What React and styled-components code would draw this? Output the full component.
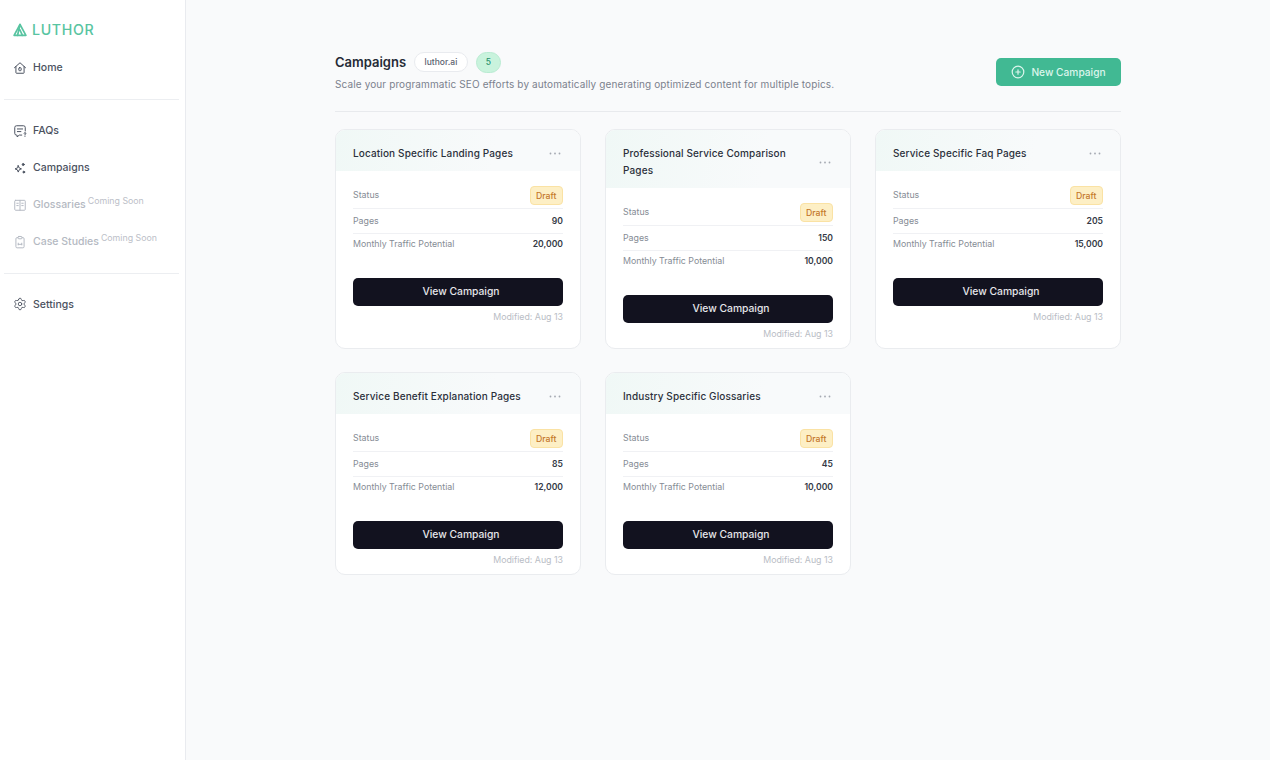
import React from 'react';
import styled, { createGlobalStyle } from 'styled-components';
import { Settings } from 'lucide-react';

const GlobalStyle = createGlobalStyle`
  html, body { margin: 0; padding: 0; }
  body {
    font-family: Inter, "Liberation Sans", sans-serif;
    background: #f9fafb;
    color: #1d2433;
  }
  * { box-sizing: border-box; }
`;

const Page = styled.div`
  display: flex;
  min-height: 760px;
`;

const Sidebar = styled.aside`
  width: 186px;
  flex-shrink: 0;
  background: #ffffff;
  border-right: 1px solid #e9ebef;
  padding: 21px 6px 0 4px;
`;

const Logo = styled.div`
  display: flex;
  align-items: center;
  gap: 5px;
  padding-left: 9px;
  height: 17px;
  margin-bottom: 11px;
  color: #58c4a1;
`;

const LogoText = styled.span`
  font-size: 14.2px;
  font-weight: 500;
  letter-spacing: 0.65px;
  line-height: 17px;
`;

const NavItem = styled.div`
  display: flex;
  align-items: center;
  gap: 6px;
  height: 37px;
  padding-left: 9px;
  font-size: 10.5px;
  font-weight: 500;
  color: ${(p) => (p.$muted ? '#b4b9c2' : '#4b5260')};
  svg { flex-shrink: 0; }
`;

const Soon = styled.sup`
  font-size: 8.8px;
  font-weight: 400;
  color: #bcc0c8;
  margin-left: -4px;
  position: relative;
  top: -4px;
  vertical-align: baseline;
`;

const NavRule = styled.hr`
  border: 0;
  border-top: 1px solid #eceef1;
  margin: ${(p) => p.$margin};
`;

const Main = styled.main`
  flex: 1;
  display: flex;
  justify-content: center;
  padding-top: 52px;
`;

const Content = styled.div`
  width: 786px;
`;

const Header = styled.header`
  display: flex;
  justify-content: space-between;
  align-items: flex-start;
  height: 60px;
  border-bottom: 1px solid #e8eaed;
`;

const TitleRow = styled.div`
  display: flex;
  align-items: center;
  gap: 8px;
  height: 20px;
`;

const Title = styled.h1`
  margin: 0;
  font-size: 13px;
  font-weight: 600;
  color: #252a36;
`;

const DomainPill = styled.span`
  display: flex;
  align-items: center;
  height: 20px;
  padding: 0 9.5px;
  font-size: 8.5px;
  font-weight: 500;
  color: #5c6370;
  background: #ffffff;
  border: 1px solid #e9ebef;
  border-radius: 10px;
`;

const CountPill = styled.span`
  display: flex;
  align-items: center;
  justify-content: center;
  width: 25px;
  height: 21px;
  font-size: 8.5px;
  font-weight: 500;
  color: #26906c;
  background: #c9f3dd;
  border: 1px solid #b9ebd2;
  border-radius: 11px;
`;

const Subtitle = styled.p`
  margin: 6px 0 0;
  font-size: 10px;
  letter-spacing: 0.12px;
  color: #7b818d;
`;

const NewButton = styled.button`
  display: flex;
  align-items: center;
  justify-content: center;
  gap: 6px;
  width: 125px;
  height: 28px;
  margin-top: 6px;
  border: 0;
  border-radius: 5px;
  background: #41b993;
  color: #dcf5ec;
  font-family: inherit;
  font-size: 10.2px;
  font-weight: 500;
`;

const Grid = styled.section`
  display: grid;
  grid-template-columns: repeat(3, 246px);
  column-gap: 24px;
  row-gap: 23px;
  margin-top: 17px;
`;

const Card = styled.article`
  display: flex;
  flex-direction: column;
  background: #ffffff;
  border: 1px solid #eaecef;
  border-radius: 10px;
  overflow: hidden;
`;

const CardHead = styled.div`
  display: flex;
  align-items: center;
  justify-content: space-between;
  padding: 15px 17px 9px;
  background: linear-gradient(100deg, #f0f8f6 0%, #f8fafb 65%);
`;

const CardTitle = styled.h2`
  margin: 0;
  max-width: 180px;
  font-size: 10px;
  line-height: 17px;
  font-weight: 500;
  letter-spacing: 0.13px;
  color: #2b303b;
`;

const Dots = styled.svg`
  margin-right: 2px;
  flex-shrink: 0;
`;

const CardBody = styled.div`
  padding: 13px 17px 9px;
`;

const Row = styled.div`
  display: flex;
  align-items: center;
  justify-content: space-between;
  height: ${(p) => p.$height}px;
  padding-bottom: 2px;
  border-bottom: ${(p) => (p.$last ? '0' : '1px solid #f0f1f4')};
  font-size: 8.8px;
  color: #868c95;
`;

const StatusRow = styled(Row)`
  padding-bottom: 3px;
`;

const RowValue = styled.span`
  padding-top: 1px;
  font-size: 8.6px;
  font-weight: 600;
  color: #343945;
`;

const Badge = styled.span`
  display: flex;
  align-items: center;
  height: 19px;
  margin-top: 2px;
  padding: 0 5.5px;
  font-size: 8.7px;
  font-weight: 500;
  color: #c4782b;
  background: #fdefc5;
  border: 1px solid #fae2a4;
  border-radius: 4px;
`;

const ViewButton = styled.button`
  display: block;
  width: 100%;
  height: 27.5px;
  margin-top: 23px;
  padding: 0 0 1px 6px;
  border: 0;
  border-radius: 5px;
  background: #12121f;
  color: #e6e6ea;
  font-family: inherit;
  font-size: 10.3px;
  font-weight: 500;
`;

const Modified = styled.div`
  margin-top: 5.5px;
  text-align: right;
  font-size: 8.8px;
  line-height: 11px;
  color: #b9bdc5;
`;

const IconBase = ({ children }) => (
  <svg width="14" height="14" viewBox="0 0 24 24" fill="none" stroke="currentColor" strokeWidth="1.7" strokeLinecap="round" strokeLinejoin="round">
    {children}
  </svg>
);

const HomeIcon = () => (
  <IconBase>
    <path d="M2.5 11.5 12 3l9.5 8.5" />
    <path d="M5 9.5V20a1 1 0 0 0 1 1h12a1 1 0 0 0 1-1V9.5" />
    <rect x="10" y="11.5" width="4" height="5" rx="1" />
  </IconBase>
);

const FaqIcon = () => (
  <IconBase>
    <path d="M21 12V6a3 3 0 0 0-3-3H6a3 3 0 0 0-3 3v10a3 3 0 0 0 3 3h1v3l4-3h4" />
    <path d="M7.5 8.5h9M7.5 13h6" />
    <path d="M19 16a1.5 1.5 0 1 1 1.5 1.7V19M20.5 21.5v.01" />
  </IconBase>
);

const SparkIcon = () => (
  <IconBase>
    <path d="M9 8 10.6 11.9 14.5 13.5 10.6 15.1 9 19 7.4 15.1 3.5 13.5 7.4 11.9Z" />
    <circle cx="17.5" cy="6" r="1.7" fill="currentColor" />
    <circle cx="18.5" cy="19" r="1.5" fill="currentColor" />
  </IconBase>
);

const BookIcon = () => (
  <IconBase>
    <rect x="3" y="4" width="18" height="17" rx="1.5" />
    <path d="M12 4v17M6.5 9h2.5M6.5 13h2.5M15 9h2.5M15 13h2.5" />
  </IconBase>
);

const ClipIcon = () => (
  <IconBase>
    <path d="M8.5 4.5H7a2 2 0 0 0-2 2V20a2 2 0 0 0 2 2h10a2 2 0 0 0 2-2V6.5a2 2 0 0 0-2-2h-1.5" />
    <rect x="8.5" y="2.5" width="7" height="4" rx="1.5" />
    <path d="M9 17v-3M15 17v-3M9 16h6" />
  </IconBase>
);

const LogoMark = () => (
  <svg width="14" height="14" viewBox="0 0 14 14" fill="none" stroke="#58c4a1" strokeWidth="1.7" strokeLinejoin="round" strokeLinecap="round">
    <path d="M7 1.5 12.9 12.3H1.1Z" />
    <path d="M7 1.5 4.6 12.3M7 7 9.4 12.3" />
  </svg>
);

const PlusCircle = () => (
  <svg width="14" height="14" viewBox="0 0 14 14" fill="none" stroke="#dcf5ec" strokeWidth="1.2" strokeLinecap="round">
    <circle cx="7" cy="7" r="5.8" />
    <path d="M7 4.8v4.4M4.8 7h4.4" />
  </svg>
);

const campaigns = [
  { title: 'Location Specific Landing Pages', pages: 90, traffic: '20,000' },
  { title: 'Professional Service Comparison Pages', pages: 150, traffic: '10,000' },
  { title: 'Service Specific Faq Pages', pages: 205, traffic: '15,000' },
  { title: 'Service Benefit Explanation Pages', pages: 85, traffic: '12,000' },
  { title: 'Industry Specific Glossaries', pages: 45, traffic: '10,000' },
];

function CampaignCard({ title, pages, traffic }) {
  return (
    <Card>
      <CardHead>
        <CardTitle>{title}</CardTitle>
        <Dots width="12" height="3" viewBox="0 0 12 3" fill="#a4a9b1">
          <circle cx="1.5" cy="1.5" r="0.9" />
          <circle cx="6" cy="1.5" r="0.9" />
          <circle cx="10.5" cy="1.5" r="0.9" />
        </Dots>
      </CardHead>
      <CardBody>
        <StatusRow $height={25}>Status<Badge>Draft</Badge></StatusRow>
        <Row $height={25}>Pages<RowValue>{pages}</RowValue></Row>
        <Row $height={21} $last>Monthly Traffic Potential<RowValue>{traffic}</RowValue></Row>
        <ViewButton>View Campaign</ViewButton>
        <Modified>Modified: Aug 13</Modified>
      </CardBody>
    </Card>
  );
}

export default function App() {
  return (
    <Page>
      <GlobalStyle />
      <Sidebar>
        <Logo><LogoMark /><LogoText>LUTHOR</LogoText></Logo>
        <NavItem><HomeIcon />Home</NavItem>
        <NavRule $margin="13px 0 12px" />
        <NavItem><FaqIcon />FAQs</NavItem>
        <NavItem><SparkIcon />Campaigns</NavItem>
        <NavItem $muted><BookIcon />Glossaries<Soon>Coming Soon</Soon></NavItem>
        <NavItem $muted><ClipIcon />Case Studies<Soon>Coming Soon</Soon></NavItem>
        <NavRule $margin="12.5px 0 12px" />
        <NavItem><Settings size={14} strokeWidth={1.5} />Settings</NavItem>
      </Sidebar>
      <Main>
        <Content>
          <Header>
            <div>
              <TitleRow>
                <Title>Campaigns</Title>
                <DomainPill>luthor.ai</DomainPill>
                <CountPill>5</CountPill>
              </TitleRow>
              <Subtitle>Scale your programmatic SEO efforts by automatically generating optimized content for multiple topics.</Subtitle>
            </div>
            <NewButton><PlusCircle />New Campaign</NewButton>
          </Header>
          <Grid>
            {campaigns.map((c) => <CampaignCard key={c.title} {...c} />)}
          </Grid>
        </Content>
      </Main>
    </Page>
  );
}
